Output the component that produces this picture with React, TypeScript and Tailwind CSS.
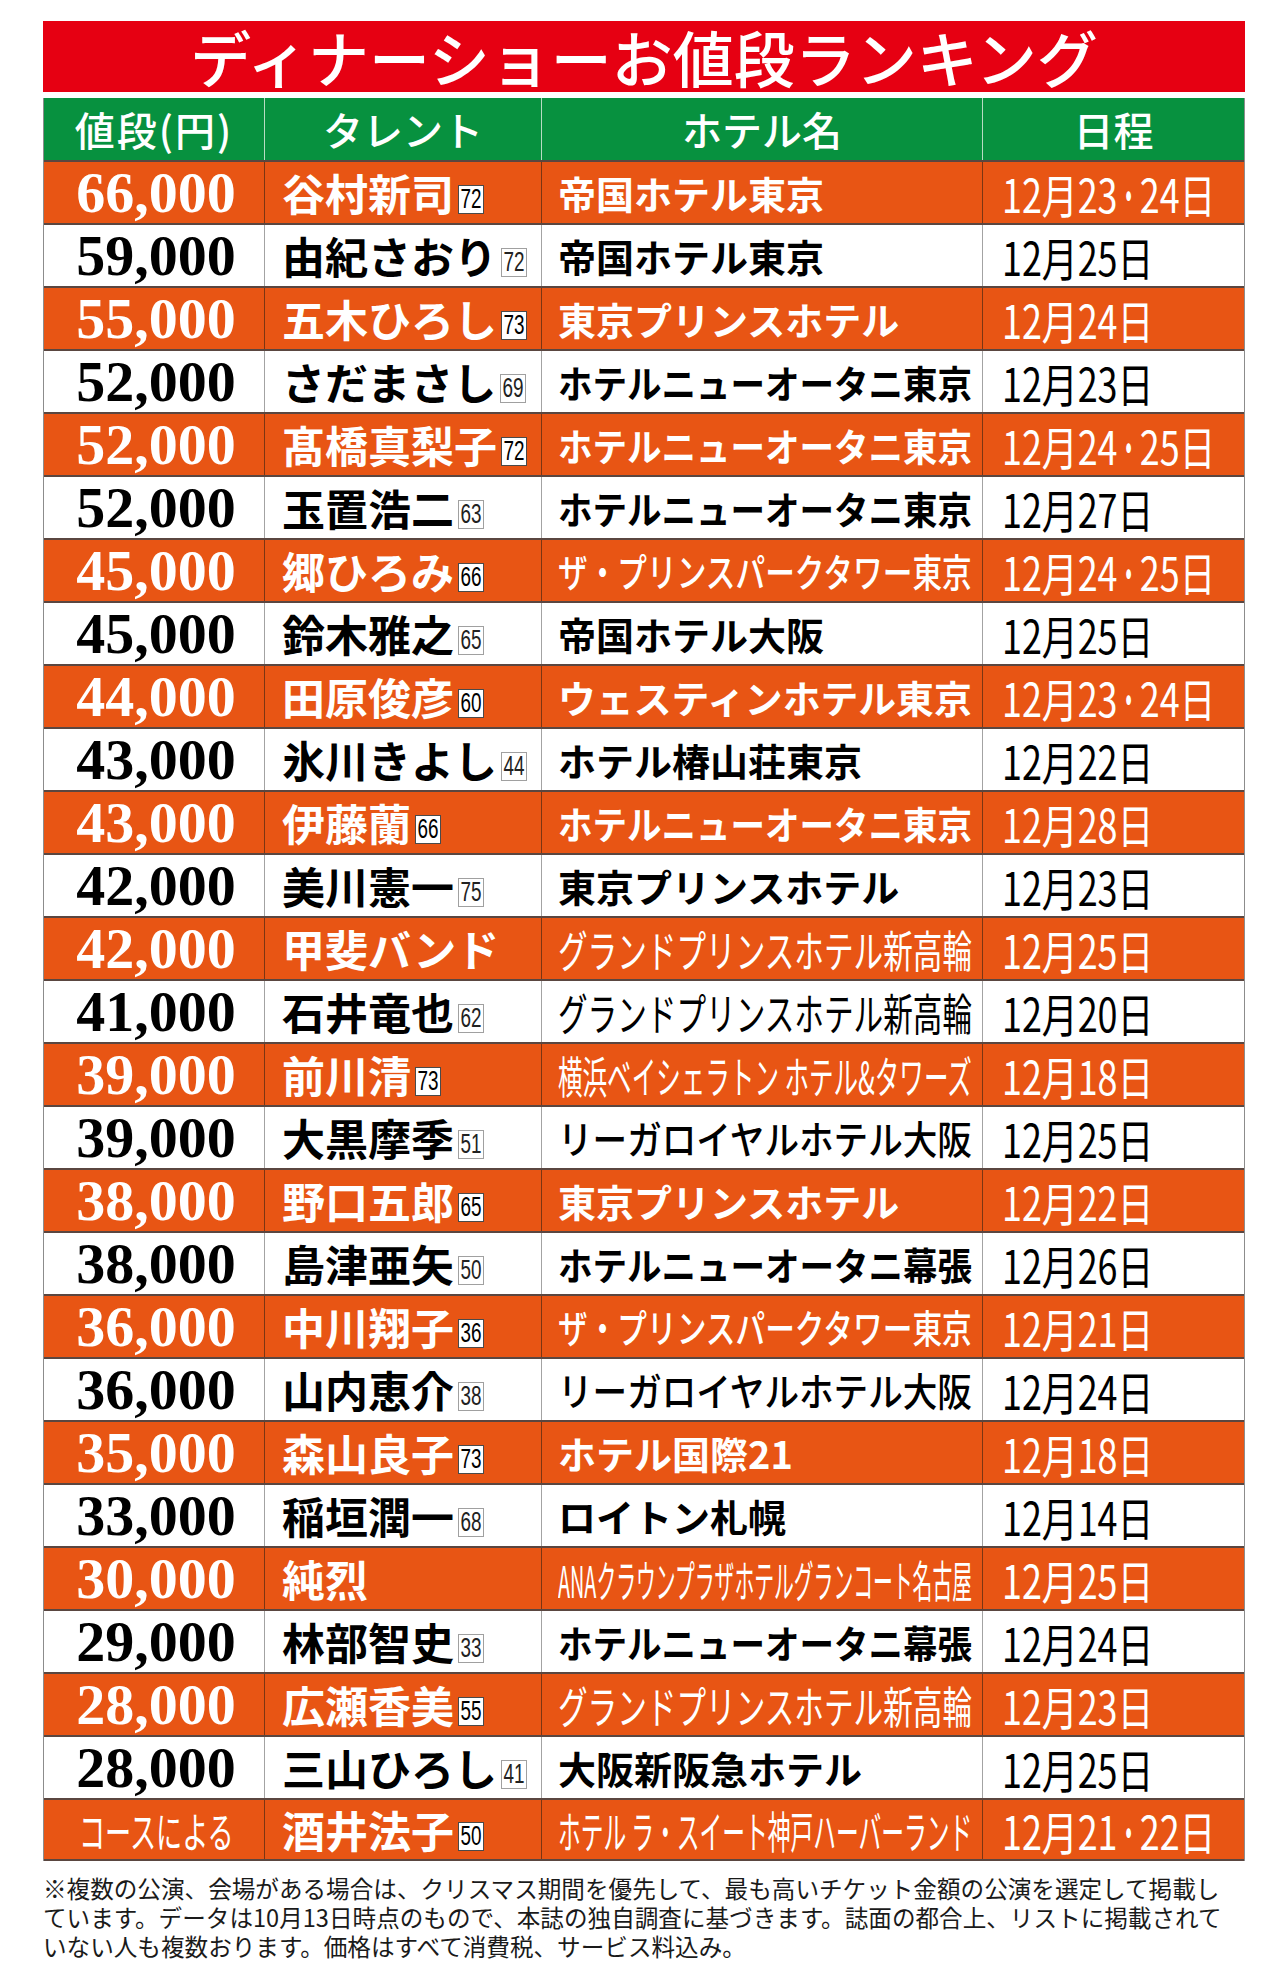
import React, { useLayoutEffect, useRef, useState } from 'react';

type Weight = 'bold' | 'medium' | 'thin';

type Row = {
  price: string;
  name: string;
  age?: string;
  hotel: string;
  date: string;
  weight?: Weight;
};

// 27 rows, orange/white alternate starting with orange
const rows: Row[] = [
  { price: '66,000', name: '谷村新司', age: '72', hotel: '帝国ホテル東京', date: '12月23・24日' },
  { price: '59,000', name: '由紀さおり', age: '72', hotel: '帝国ホテル東京', date: '12月25日' },
  { price: '55,000', name: '五木ひろし', age: '73', hotel: '東京プリンスホテル', date: '12月24日' },
  { price: '52,000', name: 'さだまさし', age: '69', hotel: 'ホテルニューオータニ東京', date: '12月23日' },
  { price: '52,000', name: '髙橋真梨子', age: '72', hotel: 'ホテルニューオータニ東京', date: '12月24・25日' },
  { price: '52,000', name: '玉置浩二', age: '63', hotel: 'ホテルニューオータニ東京', date: '12月27日' },
  { price: '45,000', name: '郷ひろみ', age: '66', hotel: 'ザ・プリンスパークタワー東京', date: '12月24・25日', weight: 'medium' },
  { price: '45,000', name: '鈴木雅之', age: '65', hotel: '帝国ホテル大阪', date: '12月25日' },
  { price: '44,000', name: '田原俊彦', age: '60', hotel: 'ウェスティンホテル東京', date: '12月23・24日' },
  { price: '43,000', name: '氷川きよし', age: '44', hotel: 'ホテル椿山荘東京', date: '12月22日' },
  { price: '43,000', name: '伊藤蘭', age: '66', hotel: 'ホテルニューオータニ東京', date: '12月28日' },
  { price: '42,000', name: '美川憲一', age: '75', hotel: '東京プリンスホテル', date: '12月23日' },
  { price: '42,000', name: '甲斐バンド', hotel: 'グランドプリンスホテル新高輪', date: '12月25日', weight: 'thin' },
  { price: '41,000', name: '石井竜也', age: '62', hotel: 'グランドプリンスホテル新高輪', date: '12月20日', weight: 'thin' },
  { price: '39,000', name: '前川清', age: '73', hotel: '横浜ベイシェラトン ホテル&タワーズ', date: '12月18日', weight: 'thin' },
  { price: '39,000', name: '大黒摩季', age: '51', hotel: 'リーガロイヤルホテル大阪', date: '12月25日', weight: 'medium' },
  { price: '38,000', name: '野口五郎', age: '65', hotel: '東京プリンスホテル', date: '12月22日' },
  { price: '38,000', name: '島津亜矢', age: '50', hotel: 'ホテルニューオータニ幕張', date: '12月26日' },
  { price: '36,000', name: '中川翔子', age: '36', hotel: 'ザ・プリンスパークタワー東京', date: '12月21日', weight: 'medium' },
  { price: '36,000', name: '山内恵介', age: '38', hotel: 'リーガロイヤルホテル大阪', date: '12月24日', weight: 'medium' },
  { price: '35,000', name: '森山良子', age: '73', hotel: 'ホテル国際21', date: '12月18日' },
  { price: '33,000', name: '稲垣潤一', age: '68', hotel: 'ロイトン札幌', date: '12月14日' },
  { price: '30,000', name: '純烈', hotel: 'ANAクラウンプラザホテルグランコート名古屋', date: '12月25日', weight: 'thin' },
  { price: '29,000', name: '林部智史', age: '33', hotel: 'ホテルニューオータニ幕張', date: '12月24日' },
  { price: '28,000', name: '広瀬香美', age: '55', hotel: 'グランドプリンスホテル新高輪', date: '12月23日', weight: 'thin' },
  { price: '28,000', name: '三山ひろし', age: '41', hotel: '大阪新阪急ホテル', date: '12月25日' },
  { price: 'コースによる', name: '酒井法子', age: '50', hotel: 'ホテル ラ・スイート神戸ハーバーランド', date: '12月21・22日', weight: 'thin' },
];

const hotelFont: Record<Weight, string> = {
  bold: 'text-[38px] font-bold',
  medium: 'text-[39px] font-medium',
  thin: 'text-[44px] font-normal',
};

// squeezes a single line horizontally when it is wider than max
function Fit({
  max,
  center,
  className,
  children,
}: {
  max: number;
  center?: boolean;
  className?: string;
  children: React.ReactNode;
}) {
  const ref = useRef<HTMLSpanElement>(null);
  const [scale, setScale] = useState(1);

  useLayoutEffect(() => {
    const measure = () => {
      const w = ref.current?.offsetWidth ?? 0;
      setScale(w > max ? max / w : 1);
    };
    measure();
    document.fonts?.ready.then(measure);
  }, [max]);

  return (
    <span
      ref={ref}
      className={`inline-block whitespace-nowrap ${center ? 'origin-center' : 'origin-left'} ${className ?? ''}`}
      style={{ transform: `scaleX(${scale})` }}
    >
      {children}
    </span>
  );
}

function DateText({ text }: { text: string }) {
  const parts = text.split('・');
  return (
    <span className="inline-block whitespace-nowrap origin-left scale-x-[0.78] text-[46px] leading-none">
      {parts.map((p, i) => (
        <React.Fragment key={i}>
          {/* the dot is set narrower than a full em, as in print */}
          {i > 0 && (
            <span className="inline-block w-[0.62em]">
              <span className="inline-block origin-left scale-x-[0.62]">・</span>
            </span>
          )}
          {p}
        </React.Fragment>
      ))}
    </span>
  );
}

function TableRow({ row, orange, last }: { row: Row; orange: boolean; last: boolean }) {
  const line = orange ? 'border-[#7c3512]' : 'border-[#a3a3a3]';
  const isCourse = row.price === 'コースによる';

  return (
    <div
      className={`grid grid-cols-[220px_277px_441px_262px] h-[63px] border-t-2 border-t-[#5a4640] ${
        last ? 'border-b-2 border-b-[#5a4640]' : ''
      } ${orange ? 'bg-[#e85514] text-white' : 'bg-white text-black'}`}
    >
      {/* Price */}
      <div className="flex items-center justify-center pl-[4px]">
        {isCourse ? (
          <Fit max={155} center className="text-[42px] leading-none">
            {row.price}
          </Fit>
        ) : (
          <span className="font-['Liberation_Serif',serif] font-bold text-[58px] leading-none">{row.price}</span>
        )}
      </div>

      {/* Talent */}
      <div className={`flex items-center border-l ${line} pl-[17px]`}>
        <span className="text-[43px] font-bold leading-none whitespace-nowrap">{row.name}</span>
        {row.age && (
          <span
            className={`ml-[4px] mt-[14px] flex h-[29px] w-[26px] items-center justify-center border bg-white ${
              orange ? 'border-[#4a4a4a] text-black' : 'border-[#a0a0a0] text-[#222]'
            }`}
          >
            <span className="inline-block scale-x-[0.7] font-['Liberation_Sans',sans-serif] text-[27px] leading-none">
              {row.age}
            </span>
          </span>
        )}
      </div>

      {/* Hotel */}
      <div className={`flex min-w-0 items-center border-l ${line} pl-[16px]`}>
        <Fit max={414} className={`leading-none ${hotelFont[row.weight ?? 'bold']}`}>
          {row.hotel}
        </Fit>
      </div>

      {/* Date */}
      <div className={`flex items-center border-l ${line} pl-[19px]`}>
        <DateText text={row.date} />
      </div>
    </div>
  );
}

export default function App() {
  return (
    <div className="min-h-[1980px] overflow-hidden bg-white px-[43px] pt-[21px] font-['Noto_Sans_CJK_JP',sans-serif]">
      {/* Title */}
      <div className="flex h-[71px] w-[1202px] items-center justify-center bg-[#e60012] text-[61px] font-medium leading-none text-white">
        ディナーショーお値段ランキング
      </div>

      <div className="mt-[6px] w-[1202px] border-x border-[#8c8c8c]">
        {/* Header */}
        <div className="grid h-[62px] grid-cols-[220px_277px_441px_262px] bg-[#07913f] text-[40px] font-medium leading-none text-white">
          <div className="flex items-center justify-center tracking-[0.05em]">値段(円)</div>
          <div className="flex items-center justify-center border-l border-[#b7dcc3]">タレント</div>
          <div className="flex items-center justify-center border-l border-[#b7dcc3]">ホテル名</div>
          <div className="flex items-center justify-center border-l border-[#b7dcc3]">日程</div>
        </div>

        {rows.map((r, i) => (
          <TableRow key={i} row={r} orange={i % 2 === 0} last={i === rows.length - 1} />
        ))}
      </div>

      {/* Note */}
      <p className="mt-[13px] whitespace-nowrap text-[23.6px] leading-[29px] text-[#1a1a1a]">
        ※複数の公演、会場がある場合は、クリスマス期間を優先して、最も高いチケット金額の公演を選定して掲載し
        <br />
        ています。データは10月13日時点のもので、本誌の独自調査に基づきます。誌面の都合上、リストに掲載されて
        <br />
        いない人も複数おります。価格はすべて消費税、サービス料込み。
      </p>
    </div>
  );
}
